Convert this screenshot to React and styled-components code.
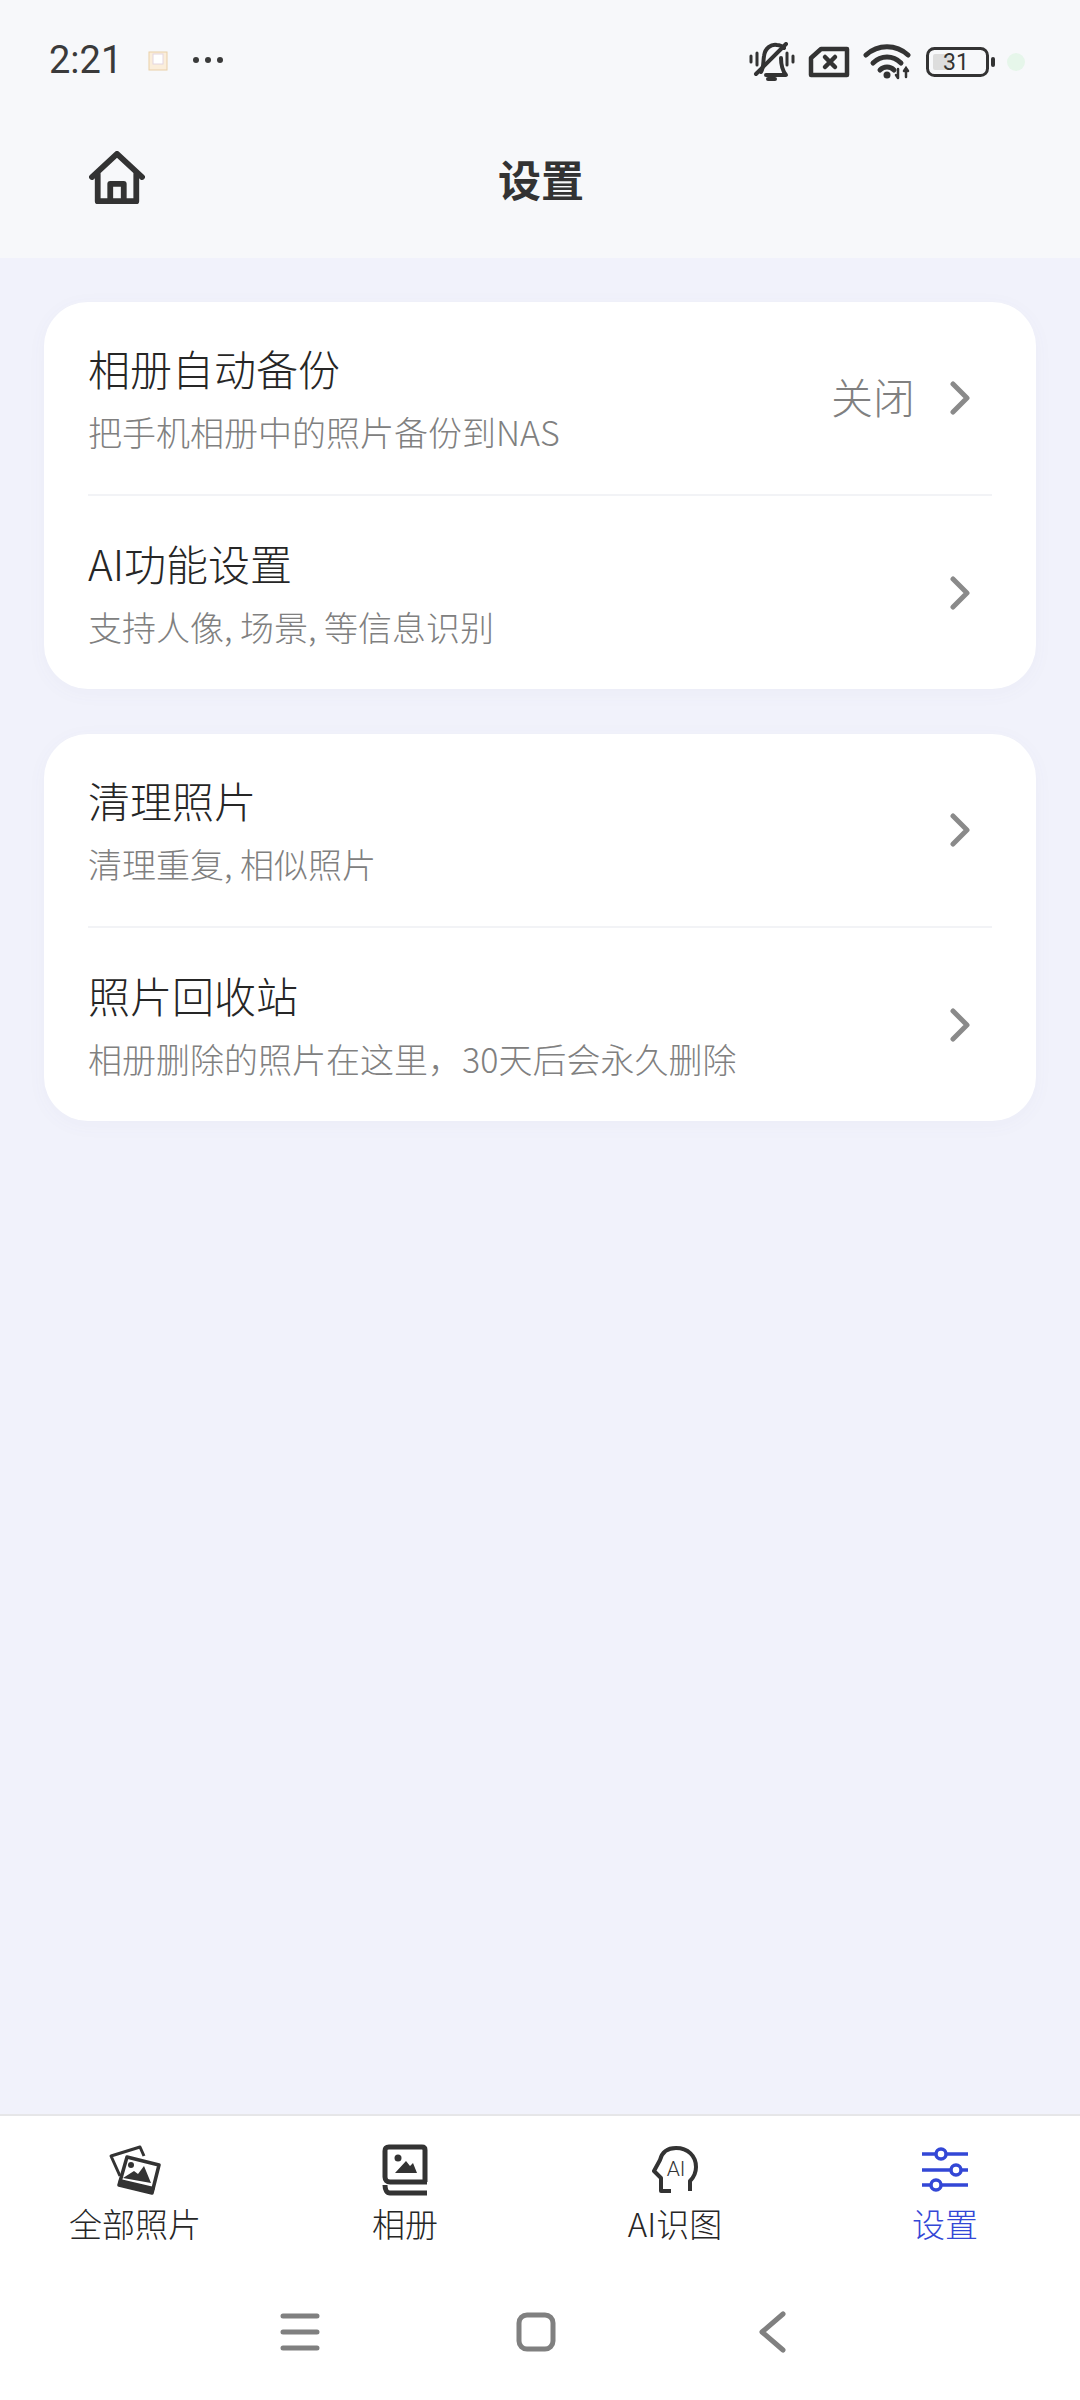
import React from 'react'
import styled, { createGlobalStyle } from 'styled-components'

const GlobalStyle = createGlobalStyle`
    html, body {
        margin: 0;
        padding: 0;
        background: #f1f2fb;
    }
    * {
        box-sizing: border-box;
    }
`

const Page = styled.div`
    width: 1080px;
    height: 2400px;
    display: flex;
    flex-direction: column;
    background: #f1f2fb;
    color: #333;
    font-family: "Noto Sans CJK SC", "Noto Sans", sans-serif;
`

const Top = styled.header`
    height: 258px;
    flex: none;
    background: #f7f8fa;
`

const StatusBar = styled.div`
    height: 120px;
    display: flex;
    align-items: center;
    justify-content: space-between;
    padding: 0 55px 0 49px;
`

const StatusGroup = styled.div`
    display: flex;
    align-items: center;
    padding-top: ${p => p.$drop || 0}px;
`

const Time = styled.span`
    font-family: Roboto, sans-serif;
    font-size: 38px;
    color: #3a3a3a;
    margin-right: 26px;
`

const StatusIcon = styled.svg`
    display: block;
    margin-left: ${p => p.$gap || 0}px;
`

const Dot = styled.span`
    width: 18px;
    height: 18px;
    margin-left: 11px;
    border-radius: 50%;
    background: #e6f6ea;
`

const TitleBar = styled.div`
    height: 138px;
    display: flex;
    align-items: center;
    padding: 0 0 22px 89px;
`

const Title = styled.h1`
    flex: 1;
    margin: 0 0 0 -56px;
    padding-right: 87px;
    text-align: center;
    font-size: 43px;
    font-weight: 700;
    color: #333;
`

const Main = styled.main`
    flex: 1;
    display: flex;
    flex-direction: column;
    gap: 45px;
    padding: 44px 44px 0;
`

const Card = styled.section`
    background: #fff;
    border-radius: 44px;
    padding: 0 44px;
    box-shadow: 0 4px 20px rgba(90, 100, 160, 0.04);
`

const Row = styled.div`
    height: ${p => (p.$last ? 193 : 194)}px;
    display: flex;
    align-items: center;
    border-bottom: ${p => (p.$last ? 'none' : '2px solid #f2f3f6')};
`

const RowText = styled.div`
    flex: 1;
    display: flex;
    flex-direction: column;
    gap: 16px;
`

const RowTitle = styled.div`
    font-size: 42px;
    line-height: 52px;
    font-weight: 300;
    color: #262626;
`

const RowSub = styled.div`
    font-size: 34px;
    line-height: 44px;
    font-weight: 300;
    color: #808080;
`

const RowValue = styled.span`
    font-size: 42px;
    font-weight: 300;
    color: #808080;
    margin-right: 34px;
    padding-bottom: 5px;
`

const Chevron = styled.svg`
    display: block;
    margin-right: 21px;
`

const TabBar = styled.nav`
    flex: none;
    height: 164px;
    display: grid;
    grid-template-columns: repeat(4, 270px);
    background: #fff;
    border-top: 2px solid #e6e6e8;
    padding-top: 26px;
`

const Tab = styled.div`
    display: flex;
    flex-direction: column;
    align-items: center;
    font-size: 33px;
    line-height: 46px;
    font-weight: 300;
    color: ${p => (p.$active ? '#3347d6' : '#262626')};
`

const TabIconSlot = styled.div`
    height: 56px;
    margin-bottom: 2px;
    display: flex;
    align-items: center;
    justify-content: center;
`

const NavBar = styled.div`
    flex: none;
    height: 122px;
    background: #fff;
    display: flex;
    justify-content: center;
    padding: 14px 8px 0 0;
`

const NavSlot = styled.div`
    width: 236px;
    height: 80px;
    display: flex;
    align-items: center;
    justify-content: center;
`

function HomeIcon() {
    return (
        <svg width="56" height="54" viewBox="0 0 58 56" fill="none" stroke="#333" strokeWidth="6" strokeLinejoin="round" strokeLinecap="round">
            <path d="M3 27 L29 3 L55 27" />
            <path d="M9 24 V52 H49 V24" />
            <path d="M22 51 V34 H36 V51" />
        </svg>
    )
}

function ChevronIcon() {
    return (
        <Chevron width="22" height="34" viewBox="0 0 22 34" fill="none" stroke="#8a8a8a" strokeWidth="5" strokeLinecap="round" strokeLinejoin="round">
            <path d="M4 3 L18 17 L4 31" />
        </Chevron>
    )
}

function MuteIcon() {
    return (
        <StatusIcon width="46" height="40" viewBox="0 0 46 40" fill="none" stroke="#333" strokeWidth="4" strokeLinecap="round" strokeLinejoin="round">
            <path d="M2 14 V20 M8 11 V23 M44 14 V20 M38 11 V23" strokeWidth="3" />
            <path d="M12 30 C15 25 14 20 15 14 C16 6 22 2 28 3 C31 3 33 4 35 6" />
            <path d="M32 16 C32 24 33 28 37 33 H17" />
            <path d="M7 32 L37 2" />
            <path d="M19 37 H26" />
        </StatusIcon>
    )
}

function SimIcon() {
    return (
        <StatusIcon $gap={13} width="42" height="32" viewBox="0 0 42 32" fill="none" stroke="#333" strokeWidth="4.5" strokeLinejoin="round" strokeLinecap="round">
            <path d="M13 3 H39 V29 H3 V12 Z" />
            <path d="M17 11 L27 21 M27 11 L17 21" />
        </StatusIcon>
    )
}

function WifiIcon() {
    return (
        <StatusIcon $gap={13} width="48" height="36" viewBox="0 0 48 36" fill="none" stroke="#333" strokeWidth="5" strokeLinecap="round">
            <path d="M3 11 C15 0 33 0 45 11" />
            <path d="M10 19 C18 11 30 11 38 19" />
            <path d="M17 26 C21 22 27 22 31 26" />
            <circle cx="24" cy="31" r="3.5" fill="#333" stroke="none" />
            <path d="M35 25 V34 M33 31 L35 34 M43 24 V33 M41 27 L43 24 L45 27" strokeWidth="2.5" />
        </StatusIcon>
    )
}

function BatteryIcon() {
    return (
        <StatusIcon $gap={15} width="70" height="30" viewBox="0 0 70 30" fill="none">
            <rect x="1.5" y="1.5" width="60" height="27" rx="7" stroke="#333" strokeWidth="3" />
            <rect x="7" y="7" width="18" height="16" rx="2" fill="#ddd" />
            <text x="30" y="23" fontFamily="Roboto, sans-serif" fontSize="23" fill="#333" textAnchor="middle">31</text>
            <rect x="65" y="10" width="4" height="10" rx="2" fill="#333" />
        </StatusIcon>
    )
}

function PhotosIcon() {
    return (
        <svg width="52" height="50" viewBox="0 0 52 50" fill="none">
            <path d="M11 31 L2 11 L31 2 L35 11" stroke="#333" strokeWidth="3" strokeLinejoin="round" />
            <path d="M18 12 L50 20 L43 48 L10 40 Z" stroke="#333" strokeWidth="3.5" strokeLinejoin="round" fill="#fff" />
            <path d="M11 35 L45 43 L43 48 L10 40 Z" fill="#333" stroke="#333" strokeWidth="2" strokeLinejoin="round" />
            <circle cx="22" cy="20" r="3" fill="#333" />
            <path d="M14 33 L25 26 L29 29 L35 21 L42 38 Z" fill="#333" />
        </svg>
    )
}

function AlbumIcon() {
    return (
        <svg width="46" height="52" viewBox="0 0 46 52" fill="none">
            <path d="M45 38 H8 C5 38 3 36 3 33 V7 C3 4 4 3 7 3 H40 C42 3 43 4 43 6 V38" stroke="#333" strokeWidth="5" />
            <path d="M3 41 C3 46 5 49 8 49 H45" stroke="#333" strokeWidth="5" />
            <circle cx="16" cy="14" r="3.5" fill="#333" />
            <path d="M13 29 L24 17 L28 22 L31 19 L35 29 Z" fill="#333" />
        </svg>
    )
}

function HeadIcon() {
    return (
        <svg width="46" height="48" viewBox="0 0 46 48" fill="none">
            <path d="M19 45 H9 V32 L2 25 L8 14 C10 6 16 2 24 2 C36 2 44 10 44 21 C44 27 42 31 38 35 V45" stroke="#333" strokeWidth="4" strokeLinejoin="round" />
            <text x="24" y="30" fontFamily="Roboto, sans-serif" fontSize="21" fill="#333" textAnchor="middle">AI</text>
        </svg>
    )
}

function SlidersIcon() {
    return (
        <svg width="46" height="46" viewBox="0 0 46 46" fill="none" stroke="#3347d6" strokeWidth="3.5">
            <path d="M0 7 H14 M24 7 H46 M0 23 H29 M39 23 H46 M0 38 H9 M19 38 H46" />
            <circle cx="19" cy="7" r="5" />
            <circle cx="34" cy="23" r="5" />
            <circle cx="14" cy="38" r="5" />
        </svg>
    )
}

const settings = [
    [
        { title: '相册自动备份', sub: '把手机相册中的照片备份到NAS', value: '关闭' },
        { title: 'AI功能设置', sub: '支持人像, 场景, 等信息识别' },
    ],
    [
        { title: '清理照片', sub: '清理重复, 相似照片' },
        { title: '照片回收站', sub: '相册删除的照片在这里，30天后会永久删除' },
    ],
]

const tabs = [
    { label: '全部照片', icon: <PhotosIcon /> },
    { label: '相册', icon: <AlbumIcon /> },
    { label: 'AI识图', icon: <HeadIcon /> },
    { label: '设置', icon: <SlidersIcon />, active: true },
]

export default function App() {
    return (
        <Page>
            <GlobalStyle />
            <Top>
                <StatusBar>
                    <StatusGroup>
                        <Time>2:21</Time>
                        <svg width="20" height="22" viewBox="0 0 20 22" fill="#fbeedb" stroke="#e9cfa8" strokeWidth="1">
                            <rect x="1" y="3" width="18" height="18" />
                            <rect x="5" y="5" width="10" height="10" fill="#fff" stroke="#e4d6e0" />
                        </svg>
                        <svg width="32" height="8" viewBox="0 0 32 8" fill="#3a3a3a" style={{ marginLeft: 24 }}>
                            <circle cx="4" cy="4" r="3" />
                            <circle cx="16" cy="4" r="3" />
                            <circle cx="28" cy="4" r="3" />
                        </svg>
                    </StatusGroup>
                    <StatusGroup $drop={3}>
                        <MuteIcon />
                        <SimIcon />
                        <WifiIcon />
                        <BatteryIcon />
                        <Dot />
                    </StatusGroup>
                </StatusBar>
                <TitleBar>
                    <HomeIcon />
                    <Title>设置</Title>
                </TitleBar>
            </Top>

            <Main>
                {settings.map((group, i) => (
                    <Card key={i}>
                        {group.map((row, j) => (
                            <Row key={row.title} $last={j === group.length - 1}>
                                <RowText>
                                    <RowTitle>{row.title}</RowTitle>
                                    <RowSub>{row.sub}</RowSub>
                                </RowText>
                                {row.value && <RowValue>{row.value}</RowValue>}
                                <ChevronIcon />
                            </Row>
                        ))}
                    </Card>
                ))}
            </Main>

            <TabBar>
                {tabs.map(tab => (
                    <Tab key={tab.label} $active={tab.active}>
                        <TabIconSlot>{tab.icon}</TabIconSlot>
                        {tab.label}
                    </Tab>
                ))}
            </TabBar>

            <NavBar>
                <NavSlot>
                    <svg width="40" height="38" viewBox="0 0 40 38" fill="none" stroke="#808080" strokeWidth="5" strokeLinecap="round">
                        <path d="M3 3 H37 M3 19 H37 M3 35 H37" />
                    </svg>
                </NavSlot>
                <NavSlot>
                    <svg width="40" height="40" viewBox="0 0 40 40" fill="none" stroke="#808080" strokeWidth="5">
                        <rect x="3" y="3" width="34" height="34" rx="8" />
                    </svg>
                </NavSlot>
                <NavSlot>
                    <svg width="28" height="42" viewBox="0 0 28 42" fill="none" stroke="#808080" strokeWidth="5" strokeLinecap="round" strokeLinejoin="round">
                        <path d="M25 3 L4 21 L25 39" />
                    </svg>
                </NavSlot>
            </NavBar>
        </Page>
    )
}
